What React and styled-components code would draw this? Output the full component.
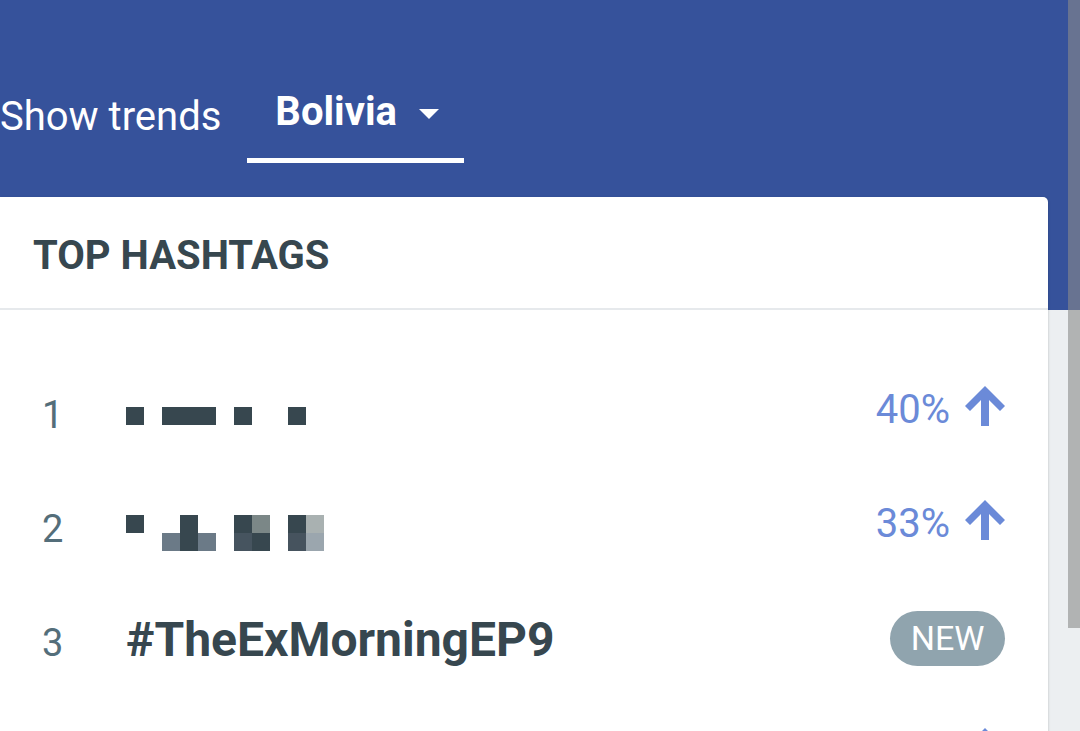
import React from "react";
import styled, { createGlobalStyle } from "styled-components";

const GlobalStyle = createGlobalStyle`
  html, body {
    margin: 0;
    padding: 0;
    background: #eceff1;
    font-family: Roboto, "Noto Sans", sans-serif;
  }
`;

const Page = styled.div`
  position: relative;
  width: 1080px;
  height: 731px;
  overflow: hidden;
  background: #eceff1;
`;

const Header = styled.header`
  height: 310px;
  box-sizing: border-box;
  background: #36529b;
  padding-top: 92px;
`;

const TrendBar = styled.div`
  display: flex;
  align-items: flex-start;
`;

const Label = styled.span`
  margin-top: 5px;
  font-size: 40px;
  line-height: 40px;
  color: #ffffff;
`;

const Tab = styled.div`
  display: flex;
  align-items: center;
  margin-left: 26px;
  padding: 0 25px 26px 28px;
  border-bottom: 5px solid #ffffff;
`;

const TabText = styled.span`
  font-size: 40px;
  line-height: 40px;
  font-weight: 700;
  color: #ffffff;
`;

const Caret = styled.span`
  margin-left: 22px;
  margin-top: 4px;
  width: 0;
  height: 0;
  border-left: 10px solid transparent;
  border-right: 10px solid transparent;
  border-top: 10px solid #ffffff;
`;

const Card = styled.section`
  width: 1048px;
  margin-top: -113px;
  background: #ffffff;
  border-radius: 0 5px 0 0;
  box-shadow: 1px 0 2px rgba(0, 0, 0, 0.1);
  min-height: 560px;
`;

const CardHeader = styled.div`
  height: 113px;
  box-sizing: border-box;
  padding: 39px 33px 0;
  border-bottom: 2px solid #e6e9ec;
`;

const Title = styled.h2`
  margin: 0;
  font-size: 40px;
  line-height: 40px;
  font-weight: 700;
  color: #37474f;
`;

const List = styled.ol`
  list-style: none;
  margin: 0;
  padding: 43px 0 0;
`;

const Row = styled.li`
  display: flex;
  align-items: center;
  height: 114px;
  padding: 0 43px 0 42px;
`;

const Rank = styled.span`
  width: 84px;
  flex-shrink: 0;
  margin-top: 10px;
  font-size: 38px;
  line-height: 38px;
  color: #546e7a;
`;

const Tag = styled.span`
  flex: 1;
  margin-top: 4px;
  font-size: 48px;
  line-height: 48px;
  font-weight: 700;
  color: #37474f;
`;

const Redacted = styled.div`
  flex: 1;
  display: grid;
  grid-template-columns: repeat(11, 18px);
  grid-auto-rows: 18px;
  margin-top: ${({ $shift }) => $shift}px;
`;

const Cell = styled.span`
  background: ${({ $c }) => $c || "transparent"};
`;

const Change = styled.div`
  display: flex;
  align-items: center;
  gap: 15px;
`;

const Percent = styled.span`
  font-size: 40px;
  line-height: 40px;
  color: #6b8ad8;
`;

const Arrow = styled.svg`
  display: block;
  margin-top: -8px;
`;

const NewBadge = styled.span`
  display: inline-flex;
  align-items: center;
  justify-content: center;
  width: 115px;
  height: 55px;
  border-radius: 28px;
  background: #90a4ae;
  color: #ffffff;
  font-size: 34px;
  line-height: 34px;
`;

const ScrollThumb = styled.div`
  position: absolute;
  top: 0;
  right: 0;
  width: 12px;
  height: 628px;
  background: rgba(139, 139, 139, 0.6);
`;

const D = "#37474f";

const rows = [
  {
    rank: 1,
    shift: 12,
    cells: [[D, null, D, D, D, null, D, null, null, D, null]],
    change: "40%",
  },
  {
    rank: 2,
    shift: 18,
    cells: [
      [D, null, null, D, null, null, D, "#7b8787", null, D, "#a9b1b1"],
      [null, null, "#6b7a87", D, "#6b7a87", null, "#46545f", D, null, "#46535e", "#9ba6ae"],
    ],
    change: "33%",
  },
  { rank: 3, tag: "#TheExMorningEP9", isNew: true },
  // only the arrow of the fourth row peeks in at the bottom edge
  { rank: 4, arrowOnly: true },
];

const UpArrow = () => (
  <Arrow width="40" height="40" viewBox="0 0 40 40">
    <polygon
      fill="#6b8ad8"
      points="20,0 40,20 35,25 24,14 24,40 16,40 16,14 5,25 0,20"
    />
  </Arrow>
);

const App = () => (
  <Page>
    <GlobalStyle />
    <Header>
      <TrendBar>
        <Label>Show trends</Label>
        <Tab>
          <TabText>Bolivia</TabText>
          <Caret />
        </Tab>
      </TrendBar>
    </Header>
    <Card>
      <CardHeader>
        <Title>TOP HASHTAGS</Title>
      </CardHeader>
      <List>
        {rows.map((r) => {
          if (r.arrowOnly) {
            return (
              <Row key={r.rank}>
                <Rank />
                <Redacted $shift={0} />
                <Change>
                  <UpArrow />
                </Change>
              </Row>
            );
          }
          return (
            <Row key={r.rank}>
              <Rank>{r.rank}</Rank>
              {r.tag ? (
                <Tag>{r.tag}</Tag>
              ) : (
                <Redacted $shift={r.shift}>
                  {r.cells.flat().map((c, i) => (
                    <Cell key={i} $c={c} />
                  ))}
                </Redacted>
              )}
              {r.isNew ? (
                <NewBadge>NEW</NewBadge>
              ) : (
                <Change>
                  <Percent>{r.change}</Percent>
                  <UpArrow />
                </Change>
              )}
            </Row>
          );
        })}
      </List>
    </Card>
    <ScrollThumb />
  </Page>
);

export default App;
